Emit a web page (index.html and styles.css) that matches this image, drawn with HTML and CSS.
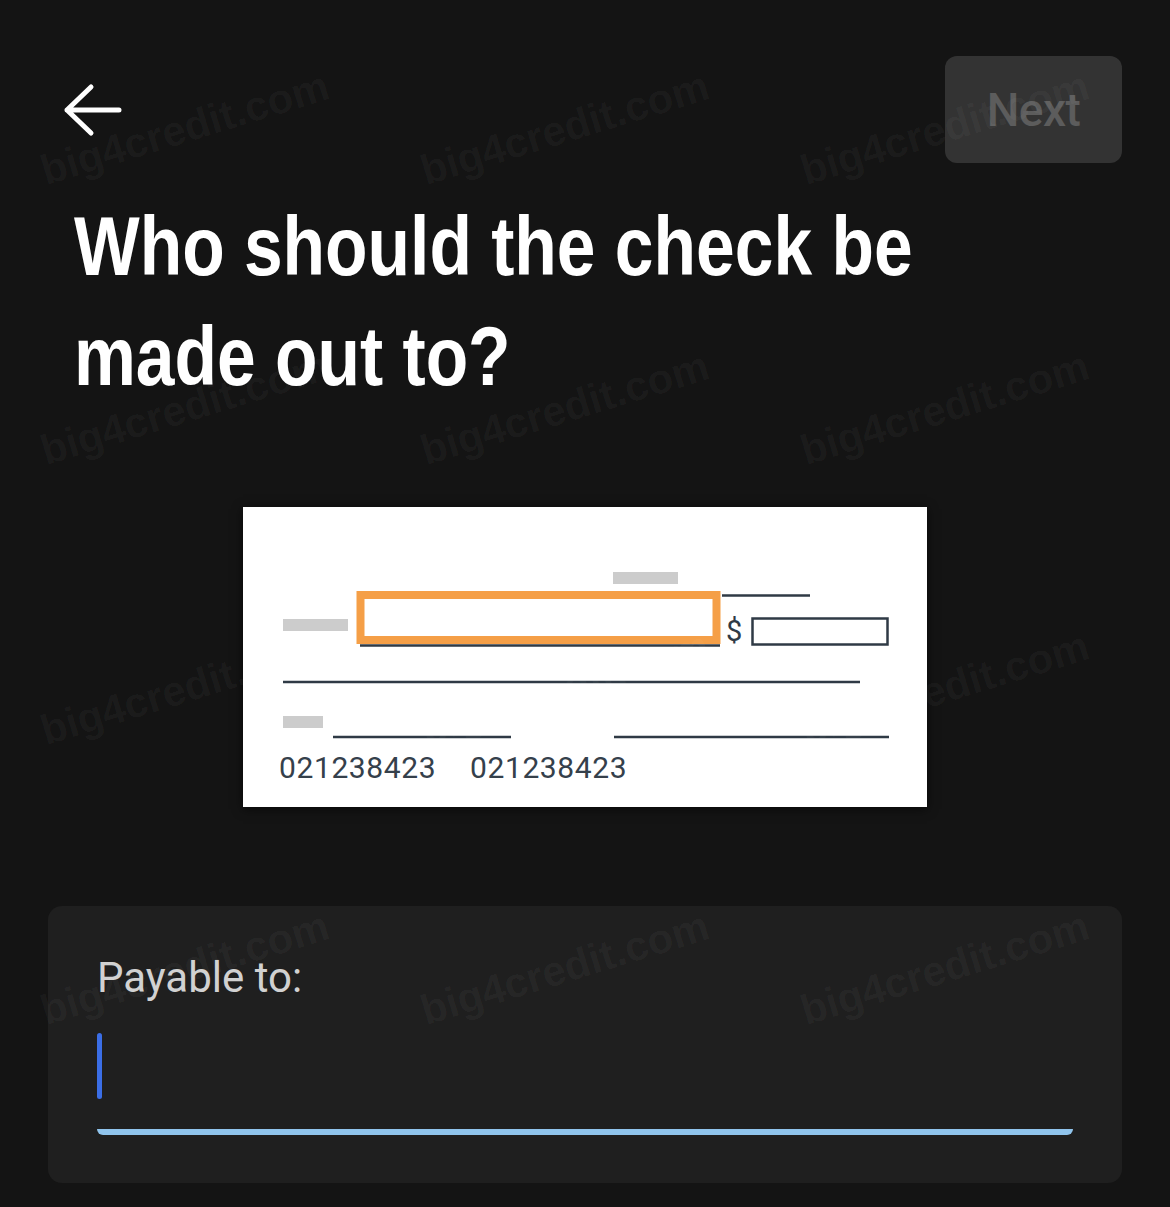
FILE: index.html
```html
<!DOCTYPE html>
<html lang="en">
<head>
<meta charset="utf-8">
<title>Who should the check be made out to?</title>
<link rel="stylesheet" href="styles.css">
</head>
<body>
<div class="page">
  <header class="topbar">
    <button class="back" aria-label="Back">
      <svg width="60" height="54" viewBox="0 0 60 54" aria-hidden="true">
        <path d="M28 4 L4 27 L28 50 M4 27 H56" fill="none" stroke="#ffffff" stroke-width="5" stroke-linecap="round" stroke-linejoin="round"/>
      </svg>
    </button>
    <button class="next" disabled>Next</button>
  </header>

  <h1 class="title"><span class="title-text">Who should the check be<br>made out to?</span></h1>

  <div class="check-wrap">
    <div class="check">
      <svg width="684" height="300" viewBox="0 0 684 300">
        <rect x="370" y="65" width="65" height="12" fill="#cccccc"/>
        <line x1="479" y1="88.5" x2="567" y2="88.5" stroke="#2f3a45" stroke-width="2.5"/>
        <rect x="40" y="112" width="65" height="12" fill="#cccccc"/>
        <line x1="117" y1="138.5" x2="477" y2="138.5" stroke="#2f3a45" stroke-width="2.5"/>
        <rect x="117.5" y="88" width="356" height="45" fill="none" stroke="#f59f47" stroke-width="8"/>
        <text x="483" y="134" class="dollar">$</text>
        <rect x="509.5" y="111.5" width="135" height="26" fill="none" stroke="#2f3a45" stroke-width="2.5"/>
        <line x1="40" y1="175" x2="617" y2="175" stroke="#2f3a45" stroke-width="2.5"/>
        <rect x="40" y="209" width="40" height="12" fill="#cccccc"/>
        <line x1="90" y1="230" x2="268" y2="230" stroke="#2f3a45" stroke-width="2.5"/>
        <line x1="371" y1="230" x2="646" y2="230" stroke="#2f3a45" stroke-width="2.5"/>
        <text x="36" y="271" class="micr">021238423</text>
        <text x="227" y="271" class="micr">021238423</text>
      </svg>
    </div>
  </div>

  <section class="field-card">
    <label class="field-label" for="payee">Payable to:</label>
    <div class="field-input" id="payee"><span class="caret"></span></div>
    <div class="field-underline"></div>
  </section>
</div>

<div class="watermarks" aria-hidden="true">
  <span>big4credit.com</span><span>big4credit.com</span><span>big4credit.com</span>
  <span>big4credit.com</span><span>big4credit.com</span><span>big4credit.com</span>
  <span>big4credit.com</span><span>big4credit.com</span><span>big4credit.com</span>
  <span>big4credit.com</span><span>big4credit.com</span><span>big4credit.com</span>
</div>
</body>
</html>
```

FILE: styles.css
```css
html, body {
  margin: 0;
  padding: 0;
  background: #141414;
}

body {
  width: 1170px;
  height: 1207px;
  overflow: hidden;
  position: relative;
  font-family: Roboto, "Liberation Sans", Arial, sans-serif;
  color: #ffffff;
}

.page {
  padding: 0 48px;
}

.topbar {
  margin-top: 56px;
  height: 107px;
  display: flex;
  align-items: center;
  justify-content: space-between;
}

.back {
  margin-left: 15px;
  padding: 0;
  border: 0;
  background: none;
  width: 60px;
  height: 54px;
  display: flex;
}

.next {
  width: 177px;
  height: 107px;
  border: 0;
  border-radius: 12px;
  background: #333333;
  color: #5c5c5c;
  font-family: Roboto, "Liberation Sans", Arial, sans-serif;
  font-size: 46px;
  font-weight: 500;
  letter-spacing: -0.5px;
  padding: 0;
}

.title {
  margin: 28px 0 0 0;
  padding-left: 26px;
  font-family: "Liberation Sans", Arial, sans-serif;
  font-weight: 700;
  font-size: 84px;
  line-height: 110px;
  color: #ffffff;
  white-space: nowrap;
}

.title-text {
  display: inline-block;
  transform: scaleX(0.828);
  transform-origin: 0 0;
}

.check-wrap {
  margin-top: 96px;
  display: flex;
  justify-content: center;
}

.check {
  width: 684px;
  height: 300px;
  background: #ffffff;
  box-shadow: 0 2px 10px rgba(0, 0, 0, 0.6);
}

.check svg {
  display: block;
}

.dollar {
  font-family: Roboto, "Liberation Sans", sans-serif;
  font-size: 29px;
  fill: #2f3a45;
}

.micr {
  font-family: Roboto, "Liberation Sans", sans-serif;
  font-size: 30px;
  letter-spacing: 0.6px;
  fill: #35404b;
}

.field-card {
  margin-top: 99px;
  background: #1f1f1f;
  border-radius: 14px;
  padding: 47px 49px 48px;
  display: flex;
  flex-direction: column;
}

.field-label {
  font-family: Roboto, "Liberation Sans", sans-serif;
  font-size: 42px;
  line-height: 50px;
  color: #d1d1d1;
}

.field-input {
  margin-top: 30px;
  height: 66px;
  display: flex;
}

.caret {
  width: 5px;
  height: 66px;
  border-radius: 3px;
  background: #3b6ee6;
}

.field-underline {
  margin-top: 30px;
  height: 6px;
  background: #90c4ec;
  border-radius: 0 0 6px 6px;
}

.watermarks {
  position: absolute;
  top: 0;
  left: 0;
  right: 0;
  bottom: 0;
  pointer-events: none;
  display: grid;
  grid-template-columns: repeat(3, 380px);
  grid-auto-rows: 280px;
  padding: 150px 0 0 48px;
}

.watermarks span {
  display: block;
  width: 320px;
  height: 42px;
  font-family: "Liberation Sans", Arial, sans-serif;
  font-weight: 700;
  font-size: 42px;
  line-height: 42px;
  color: rgba(255, 255, 255, 0.04);
  transform-origin: 0 100%;
  transform: rotate(-17deg);
  white-space: nowrap;
}
```
